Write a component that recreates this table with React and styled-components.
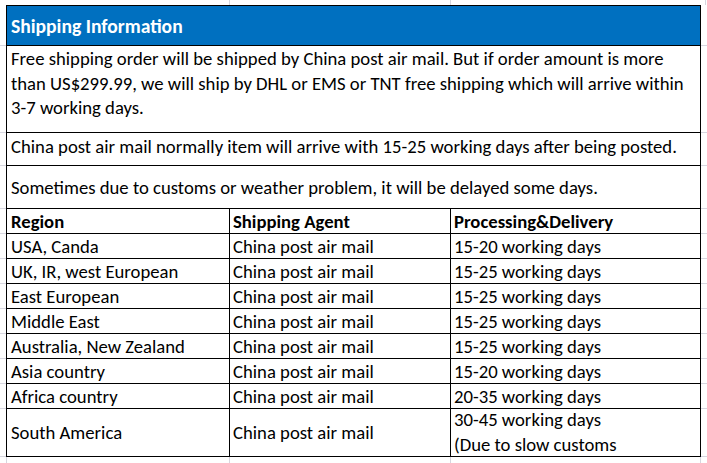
import React from "react";
import styled, { createGlobalStyle } from "styled-components";

const GRID = "#d6d6df";

const GlobalStyle = createGlobalStyle`
  html, body {
    margin: 0;
    padding: 0;
    background: #ffffff;
  }
`;

const rows = [
  ["USA, Canda", "China post air mail", "15-20 working days"],
  ["UK, IR, west European", "China post air mail", "15-25 working days"],
  ["East European", "China post air mail", "15-25 working days"],
  ["Middle East", "China post air mail", "15-25 working days"],
  ["Australia, New Zealand", "China post air mail", "15-25 working days"],
  ["Asia country", "China post air mail", "15-20 working days"],
  ["Africa country", "China post air mail", "20-35 working days"]
];

export default function App() {
  return (
    <Sheet>
      <GlobalStyle />
      <Strip>
        <GridCell $w={230} />
        <GridCell $w={221} />
        <GridCell $w={255} />
      </Strip>

      <Row $h={41}>
        <Gutter />
        <Title $w={695}>Shipping Information</Title>
        <Gutter />
      </Row>

      <Row $h={87}>
        <Gutter />
        <Cell $w={695} $first $top>
          <Text>
            Free shipping order will be shipped by China post air mail. But if
            order amount is more
            <br />
            than US$299.99, we will ship by DHL or EMS or TNT free shipping
            which will arrive within
            <br />
            3-7 working days.
          </Text>
        </Cell>
        <Gutter />
      </Row>

      <Row $h={33}>
        <Gutter />
        <Cell $w={695} $first $lift>
          China post air mail normally item will arrive with 15-25 working days
          after being posted.
        </Cell>
        <Gutter />
      </Row>

      <Row $h={43}>
        <Gutter />
        <Cell $w={695} $first>
          Sometimes due to customs or weather problem, it will be delayed some
          days.
        </Cell>
        <Gutter />
      </Row>

      <Row $h={25}>
        <Gutter />
        <Cell $w={224} $first $bold>
          Region
        </Cell>
        <Cell $w={221} $bold>
          Shipping Agent
        </Cell>
        <Cell $w={250} $bold>
          Processing&amp;Delivery
        </Cell>
        <Gutter />
      </Row>

      {rows.map(([region, agent, time]) => (
        <Row $h={25} key={region}>
          <Gutter />
          <Cell $w={224} $first>
            {region}
          </Cell>
          <Cell $w={221}>{agent}</Cell>
          <Cell $w={250}>{time}</Cell>
          <Gutter />
        </Row>
      ))}

      <Row $h={48}>
        <Gutter />
        <Cell $w={224} $first>
          South America
        </Cell>
        <Cell $w={221}>China post air mail</Cell>
        <Cell $w={250}>
          <Text>
            30-45 working days
            <br />
            (Due to slow customs
          </Text>
        </Cell>
        <Gutter />
      </Row>

      <Strip>
        <GridCell $w={7} />
        <GridCell $w={223} />
        <GridCell $w={221} />
        <GridCell $w={250} />
      </Strip>
    </Sheet>
  );
}

const Sheet = styled.div`
  width: 707px;
  height: 463px;
  overflow: hidden;
  font-family: Carlito, "Open Sans", "Liberation Sans", sans-serif;
  font-size: 18.7px;
  color: #000;
`;

const Row = styled.div`
  display: flex;
  height: ${({ $h }) => $h}px;
`;

const Strip = styled.div`
  display: flex;
  height: 5px;

  &:last-child {
    height: 7px;
  }
`;

const GridCell = styled.div`
  box-sizing: border-box;
  flex: none;
  width: ${({ $w }) => $w}px;
  border-right: 1px solid ${GRID};
`;

const Gutter = styled.div`
  box-sizing: border-box;
  flex: none;
  width: 6px;
  border-bottom: 1px solid ${GRID};
`;

const Cell = styled.div`
  box-sizing: border-box;
  flex: none;
  width: ${({ $w }) => $w}px;
  display: flex;
  align-items: ${({ $top }) => ($top ? "flex-start" : "center")};
  padding: ${({ $top, $lift }) =>
    $top ? "1px 4px 0 4px" : $lift ? "0 4px 6px 3px" : "0 4px 0 3px"};
  padding-left: ${({ $first }) => ($first ? "4px" : "3px")};
  border-right: 1px solid #000;
  border-bottom: 1px solid #000;
  border-left: ${({ $first }) => ($first ? "1px solid #000" : "none")};
  font-weight: ${({ $bold }) => ($bold ? 700 : 400)};
  white-space: nowrap;
  overflow: hidden;
`;

const Text = styled.div`
  line-height: 24.5px;
`;

const Title = styled.div`
  box-sizing: border-box;
  flex: none;
  width: ${({ $w }) => $w}px;
  display: flex;
  align-items: center;
  padding: 0 4px;
  background: #0070c0;
  color: #ffffff;
  font-size: 19.6px;
  font-weight: 700;
  border: 1px solid #000;
`;
